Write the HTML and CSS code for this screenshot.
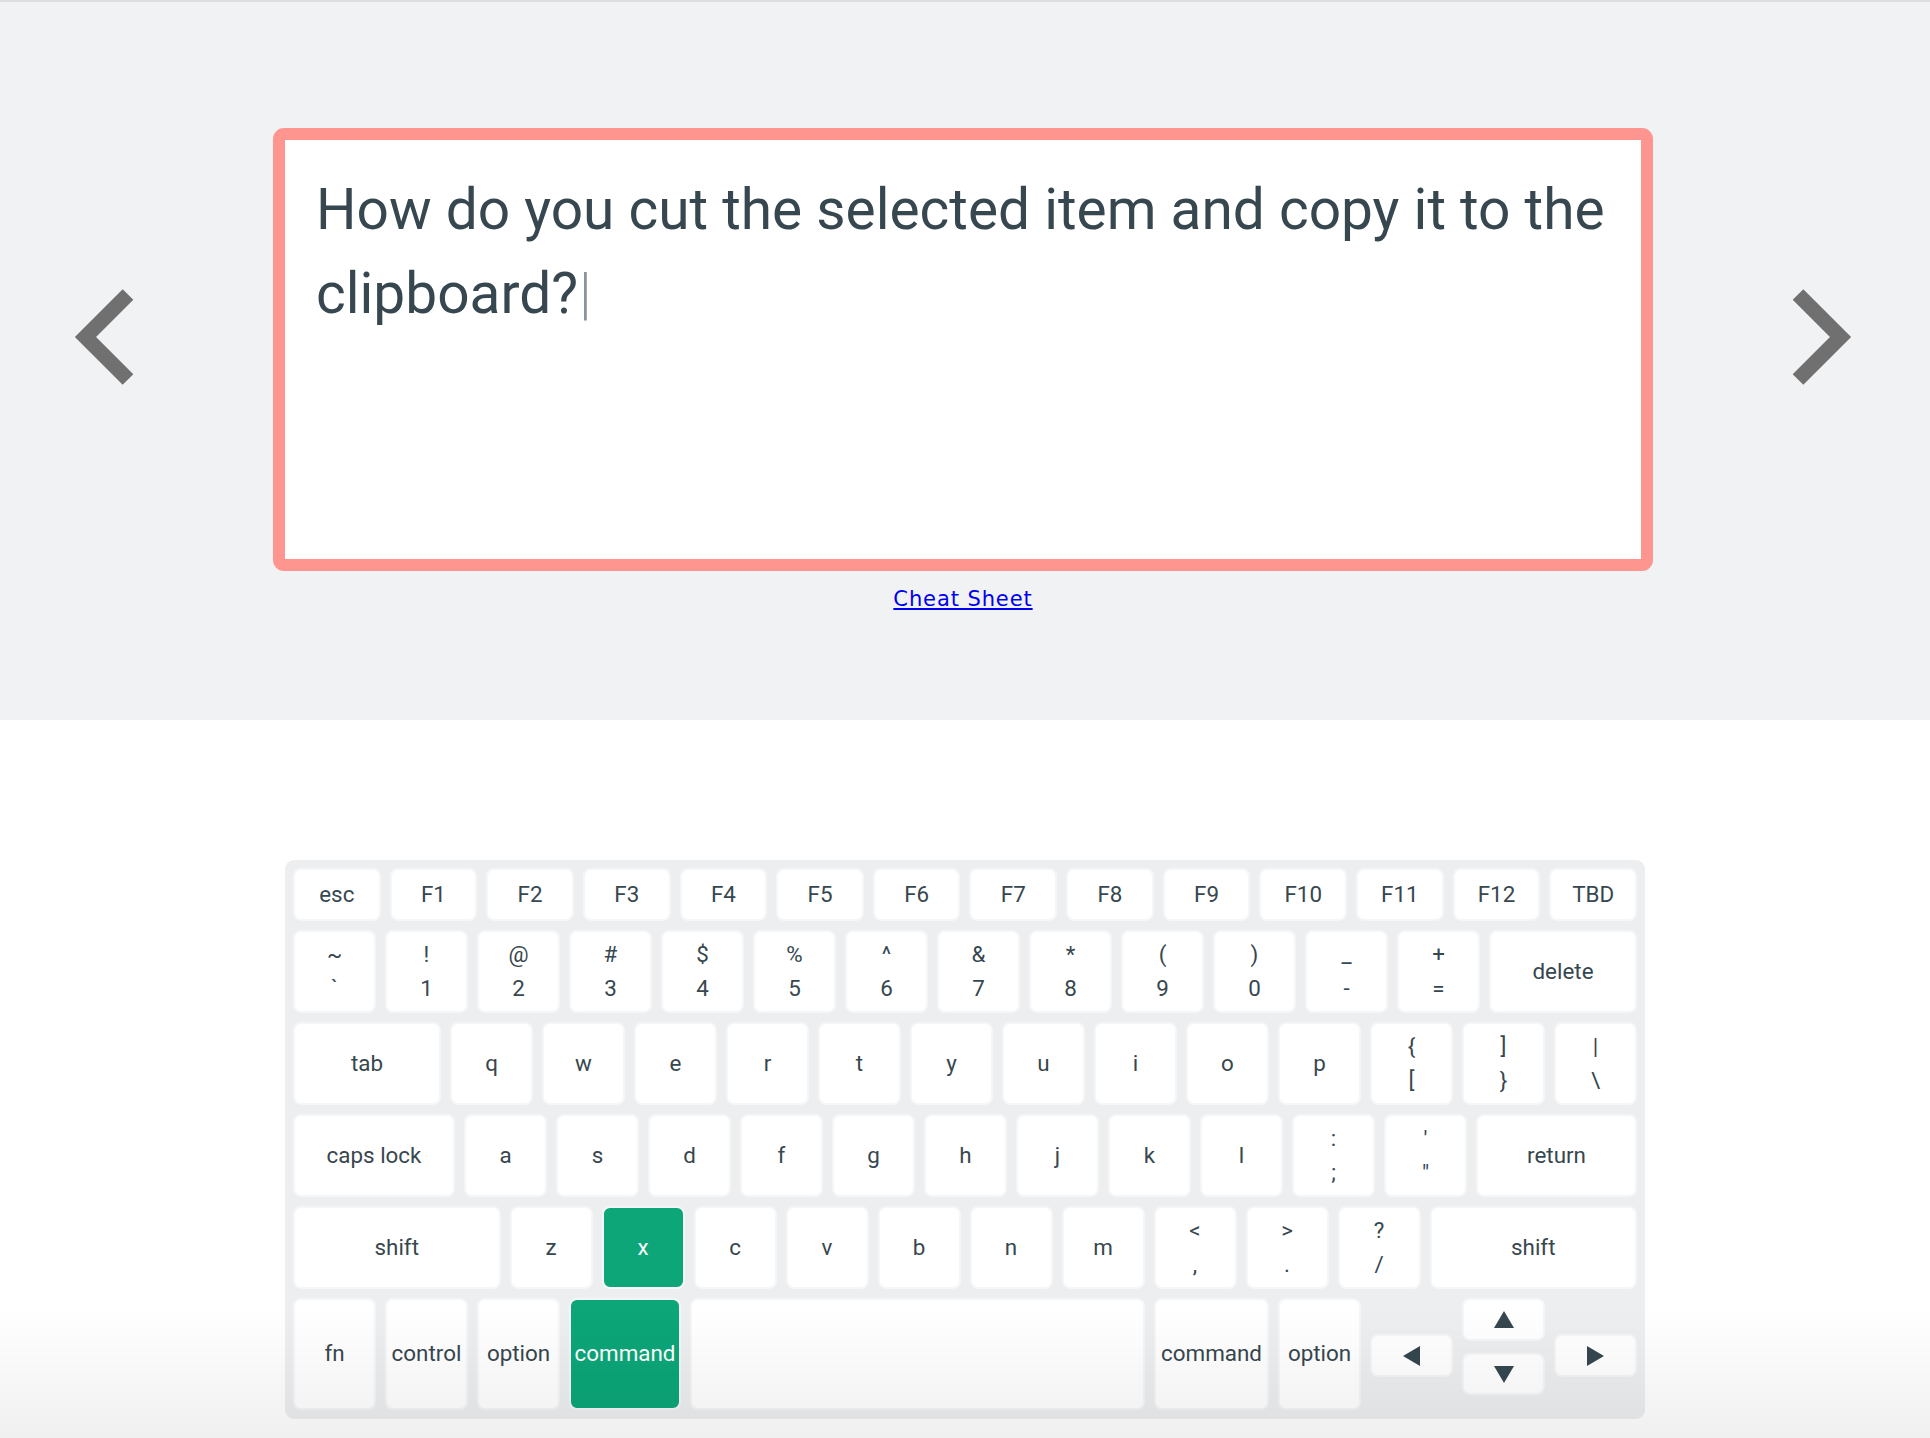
FILE: index.html
```html
<!DOCTYPE html>
<html lang="en">
<head>
<meta charset="utf-8">
<title>Shortcut Trainer</title>
<link rel="stylesheet" href="styles.css">
</head>
<body>
<section class="top">
  <div class="stage">
    <svg class="nav nav-left" viewBox="0 0 60 97" width="60" height="97"><polyline points="54,5.5 11.5,48 54,90.5" /></svg>
    <div class="center">
      <div class="card">
        <p class="question">How do you cut the selected item and copy it to the clipboard?<span class="caret">|</span></p>
      </div>
      <div class="cheat-wrap"><a class="cheat" href="#">Cheat Sheet</a></div>
    </div>
    <svg class="nav nav-right" viewBox="0 0 60 97" width="60" height="97"><polyline points="6,5.5 48.5,48 6,90.5" /></svg>
  </div>
</section>

<section class="bottom">
  <div class="keyboard">
    <div class="row r1">
      <div class="key">esc</div>
      <div class="key">F1</div>
      <div class="key">F2</div>
      <div class="key">F3</div>
      <div class="key">F4</div>
      <div class="key">F5</div>
      <div class="key">F6</div>
      <div class="key">F7</div>
      <div class="key">F8</div>
      <div class="key">F9</div>
      <div class="key">F10</div>
      <div class="key">F11</div>
      <div class="key">F12</div>
      <div class="key">TBD</div>
    </div>
    <div class="row r2">
      <div class="key std"><span>~</span><span>`</span></div>
      <div class="key std"><span>!</span><span>1</span></div>
      <div class="key std"><span>@</span><span>2</span></div>
      <div class="key std"><span>#</span><span>3</span></div>
      <div class="key std"><span>$</span><span>4</span></div>
      <div class="key std"><span>%</span><span>5</span></div>
      <div class="key std"><span>^</span><span>6</span></div>
      <div class="key std"><span>&amp;</span><span>7</span></div>
      <div class="key std"><span>*</span><span>8</span></div>
      <div class="key std"><span>(</span><span>9</span></div>
      <div class="key std"><span>)</span><span>0</span></div>
      <div class="key std"><span>_</span><span>-</span></div>
      <div class="key std"><span>+</span><span>=</span></div>
      <div class="key grow">delete</div>
    </div>
    <div class="row r3">
      <div class="key grow">tab</div>
      <div class="key std">q</div>
      <div class="key std">w</div>
      <div class="key std">e</div>
      <div class="key std">r</div>
      <div class="key std">t</div>
      <div class="key std">y</div>
      <div class="key std">u</div>
      <div class="key std">i</div>
      <div class="key std">o</div>
      <div class="key std">p</div>
      <div class="key std"><span>{</span><span>[</span></div>
      <div class="key std"><span>]</span><span>}</span></div>
      <div class="key std"><span>|</span><span>\</span></div>
    </div>
    <div class="row r4">
      <div class="key caps">caps lock</div>
      <div class="key std">a</div>
      <div class="key std">s</div>
      <div class="key std">d</div>
      <div class="key std">f</div>
      <div class="key std">g</div>
      <div class="key std">h</div>
      <div class="key std">j</div>
      <div class="key std">k</div>
      <div class="key std">l</div>
      <div class="key std"><span>:</span><span>;</span></div>
      <div class="key std"><span>'</span><span>"</span></div>
      <div class="key grow">return</div>
    </div>
    <div class="row r5">
      <div class="key grow">shift</div>
      <div class="key std">z</div>
      <div class="key std active">x</div>
      <div class="key std">c</div>
      <div class="key std">v</div>
      <div class="key std">b</div>
      <div class="key std">n</div>
      <div class="key std">m</div>
      <div class="key std"><span>&lt;</span><span>,</span></div>
      <div class="key std"><span>&gt;</span><span>.</span></div>
      <div class="key std"><span>?</span><span>/</span></div>
      <div class="key grow">shift</div>
    </div>
    <div class="row r6">
      <div class="key std">fn</div>
      <div class="key std">control</div>
      <div class="key std">option</div>
      <div class="key cmd-l active">command</div>
      <div class="key grow"></div>
      <div class="key cmd-r">command</div>
      <div class="key std">option</div>
      <div class="arrows">
        <div class="key arr-side"><svg viewBox="0 0 17 20" width="17" height="20"><polygon points="17,0 17,20 0,10"/></svg></div>
        <div class="arr-col">
          <div class="key arr-up"><svg viewBox="0 0 20 17" width="20" height="17"><polygon points="10,0 20,17 0,17"/></svg></div>
          <div class="key arr-down"><svg viewBox="0 0 20 17" width="20" height="17"><polygon points="0,0 20,0 10,17"/></svg></div>
        </div>
        <div class="key arr-side"><svg viewBox="0 0 17 20" width="17" height="20"><polygon points="0,0 17,10 0,20"/></svg></div>
      </div>
    </div>
  </div>
</section>
<div class="fade"></div>
</body>
</html>
```

FILE: styles.css
```css
html, body {
  margin: 0;
  padding: 0;
}

body {
  font-family: Roboto, "Noto Sans", sans-serif;
  color: #37474f;
  background: #ffffff;
  min-height: 1438px;
}

/* ---------- top (question) ---------- */
.top {
  background: #f1f2f4;
  border-top: 2px solid #dcdee1;
  height: 720px;
  box-sizing: border-box;
}

.stage {
  display: flex;
  align-items: flex-start;
  padding: 126px 0 0 74px;
}

.nav {
  flex: none;
  margin-top: 161px;
}

.nav polyline {
  fill: none;
  stroke: #707070;
  stroke-width: 15;
  stroke-linejoin: miter;
  stroke-linecap: butt;
}

.nav-left {
  margin-right: 139px;
}

.nav-right {
  margin-left: 139px;
}

.center {
  width: 1380px;
  flex: none;
}

.card {
  height: 443px;
  box-sizing: border-box;
  background: #ffffff;
  border: 12px solid #fe958f;
  border-radius: 11px;
  padding: 28px 14px 0 31px;
}

.question {
  margin: 0;
  font-size: 56.8px;
  line-height: 83.5px;
  color: #37474f;
}

.caret {
  color: #8a959b;
  font-weight: 300;
  margin-left: 1px;
}

.cheat-wrap {
  margin-top: 16px;
  text-align: center;
  line-height: 24px;
}

.cheat {
  font-family: "DejaVu Sans", Verdana, sans-serif;
  font-size: 21px;
  letter-spacing: 0.9px;
  color: #0000ee;
  text-decoration: underline;
}

/* ---------- keyboard ---------- */
.bottom {
  padding-top: 140px;
}

.keyboard {
  width: 1360px;
  box-sizing: border-box;
  margin: 0 auto;
  padding: 8px 8px 9px 8px;
  background: #eceef0;
  border-radius: 9px;
  display: flex;
  flex-direction: column;
  gap: 9px;
}

.row {
  display: flex;
  gap: 9px;
  height: 83px;
}

.row.r1 {
  height: 53px;
}

.row.r6 {
  height: 112px;
}

.key {
  box-sizing: border-box;
  background: #ffffff;
  border: 2px solid #f5f6f8;
  border-radius: 8px;
  display: flex;
  flex-direction: column;
  align-items: center;
  justify-content: center;
  font-size: 22.4px;
  line-height: 33.6px;
  color: #37474f;
  white-space: nowrap;
}

.key span {
  display: block;
}

.r1 .key {
  flex: 1 1 0;
}

.key.std {
  flex: none;
  width: 83px;
}

.key.grow {
  flex: 1 1 0;
}

.key.caps {
  flex: none;
  width: 162px;
}

.key.cmd-l {
  flex: none;
  width: 112px;
}

.key.cmd-r {
  flex: none;
  width: 115px;
}

.key.active {
  background: #0ca678;
  color: #ffffff;
}

.arrows {
  display: flex;
  gap: 9px;
  align-items: flex-start;
}

.arr-side {
  width: 83px;
  height: 43px;
  margin-top: 36px;
}

.arr-col {
  display: flex;
  flex-direction: column;
  gap: 12px;
}

.arr-up {
  width: 83px;
  height: 43px;
}

.arr-down {
  width: 83px;
  height: 42px;
}

.key svg polygon {
  fill: #37474f;
}

/* bottom fade overlay */
.fade {
  position: fixed;
  left: 0;
  right: 0;
  bottom: 0;
  height: 130px;
  background: linear-gradient(to bottom, rgba(0, 0, 0, 0), rgba(0, 0, 0, 0.06));
  pointer-events: none;
}
```
